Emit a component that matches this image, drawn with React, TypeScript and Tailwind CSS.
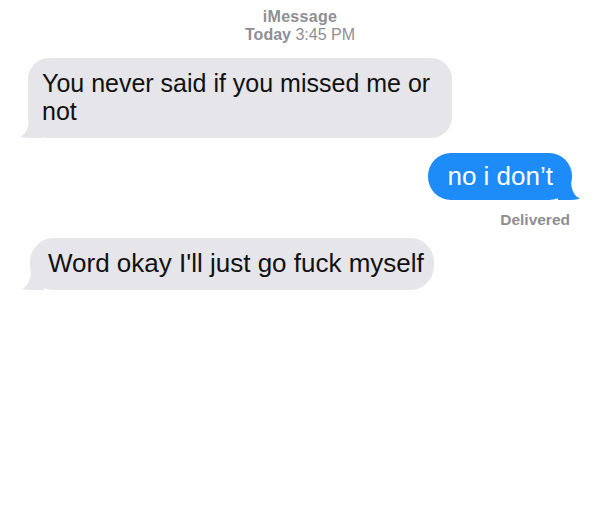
export default function App() {
  return (
    <div className="w-[600px] h-[506px] bg-white font-['Liberation_Sans',Arial,sans-serif] overflow-hidden">
      <div className="pt-[8px] text-center text-[16px] leading-[18px] text-[#8e8e93]">
        <div className="font-semibold tracking-[0.3px]">iMessage</div>
        <div>
          <span className="font-semibold">Today</span> 3:45 PM
        </div>
      </div>

      <div className="mt-[14px] pl-[28px]">
        <div className="relative w-[424px] rounded-[21px] bg-[#e5e5ea] pl-[14px] pr-[8px] pt-[11px] pb-[13px] text-[25px] leading-[28px] text-[#111]">
          <span className="whitespace-nowrap">You never said if you missed me or</span>
          <br />
          not
          <svg className="absolute -left-[8px] bottom-0" width="22" height="20" viewBox="0 0 22 20">
            <path d="M22 0 L22 20 L12 20 C8 20 3 20 0 18.5 C6 16 9 10 9 0 Z" fill="#e5e5ea" />
          </svg>
        </div>
      </div>

      <div className="mt-[15px] flex flex-col items-end pr-[28px]">
        <div className="relative rounded-[23px] bg-[#1d8bf8] px-[19px] pt-[9px] pb-[10px] text-[26px] leading-[28px] text-white">
          no i don’t
          <svg className="absolute -right-[8px] bottom-0" width="22" height="20" viewBox="0 0 22 20">
            <path d="M0 0 L0 20 L10 20 C14 20 19 20 22 18.5 C16 16 13 10 13 0 Z" fill="#1d8bf8" />
          </svg>
        </div>
        <div className="mt-[11px] pr-[2px] text-[15.5px] leading-[18px] font-semibold text-[#8e8e93]">Delivered</div>
      </div>

      <div className="mt-[9px] pl-[30px]">
        <div className="relative inline-block rounded-[24px] bg-[#e5e5ea] pl-[18px] pr-[10px] pt-[11px] pb-[13px] text-[26px] leading-[28px] text-[#111]">
          Word okay I'll just go fuck myself
          <svg className="absolute -left-[8px] bottom-0" width="22" height="20" viewBox="0 0 22 20">
            <path d="M22 0 L22 20 L12 20 C8 20 3 20 0 18.5 C6 16 9 10 9 0 Z" fill="#e5e5ea" />
          </svg>
        </div>
      </div>
    </div>
  );
}
